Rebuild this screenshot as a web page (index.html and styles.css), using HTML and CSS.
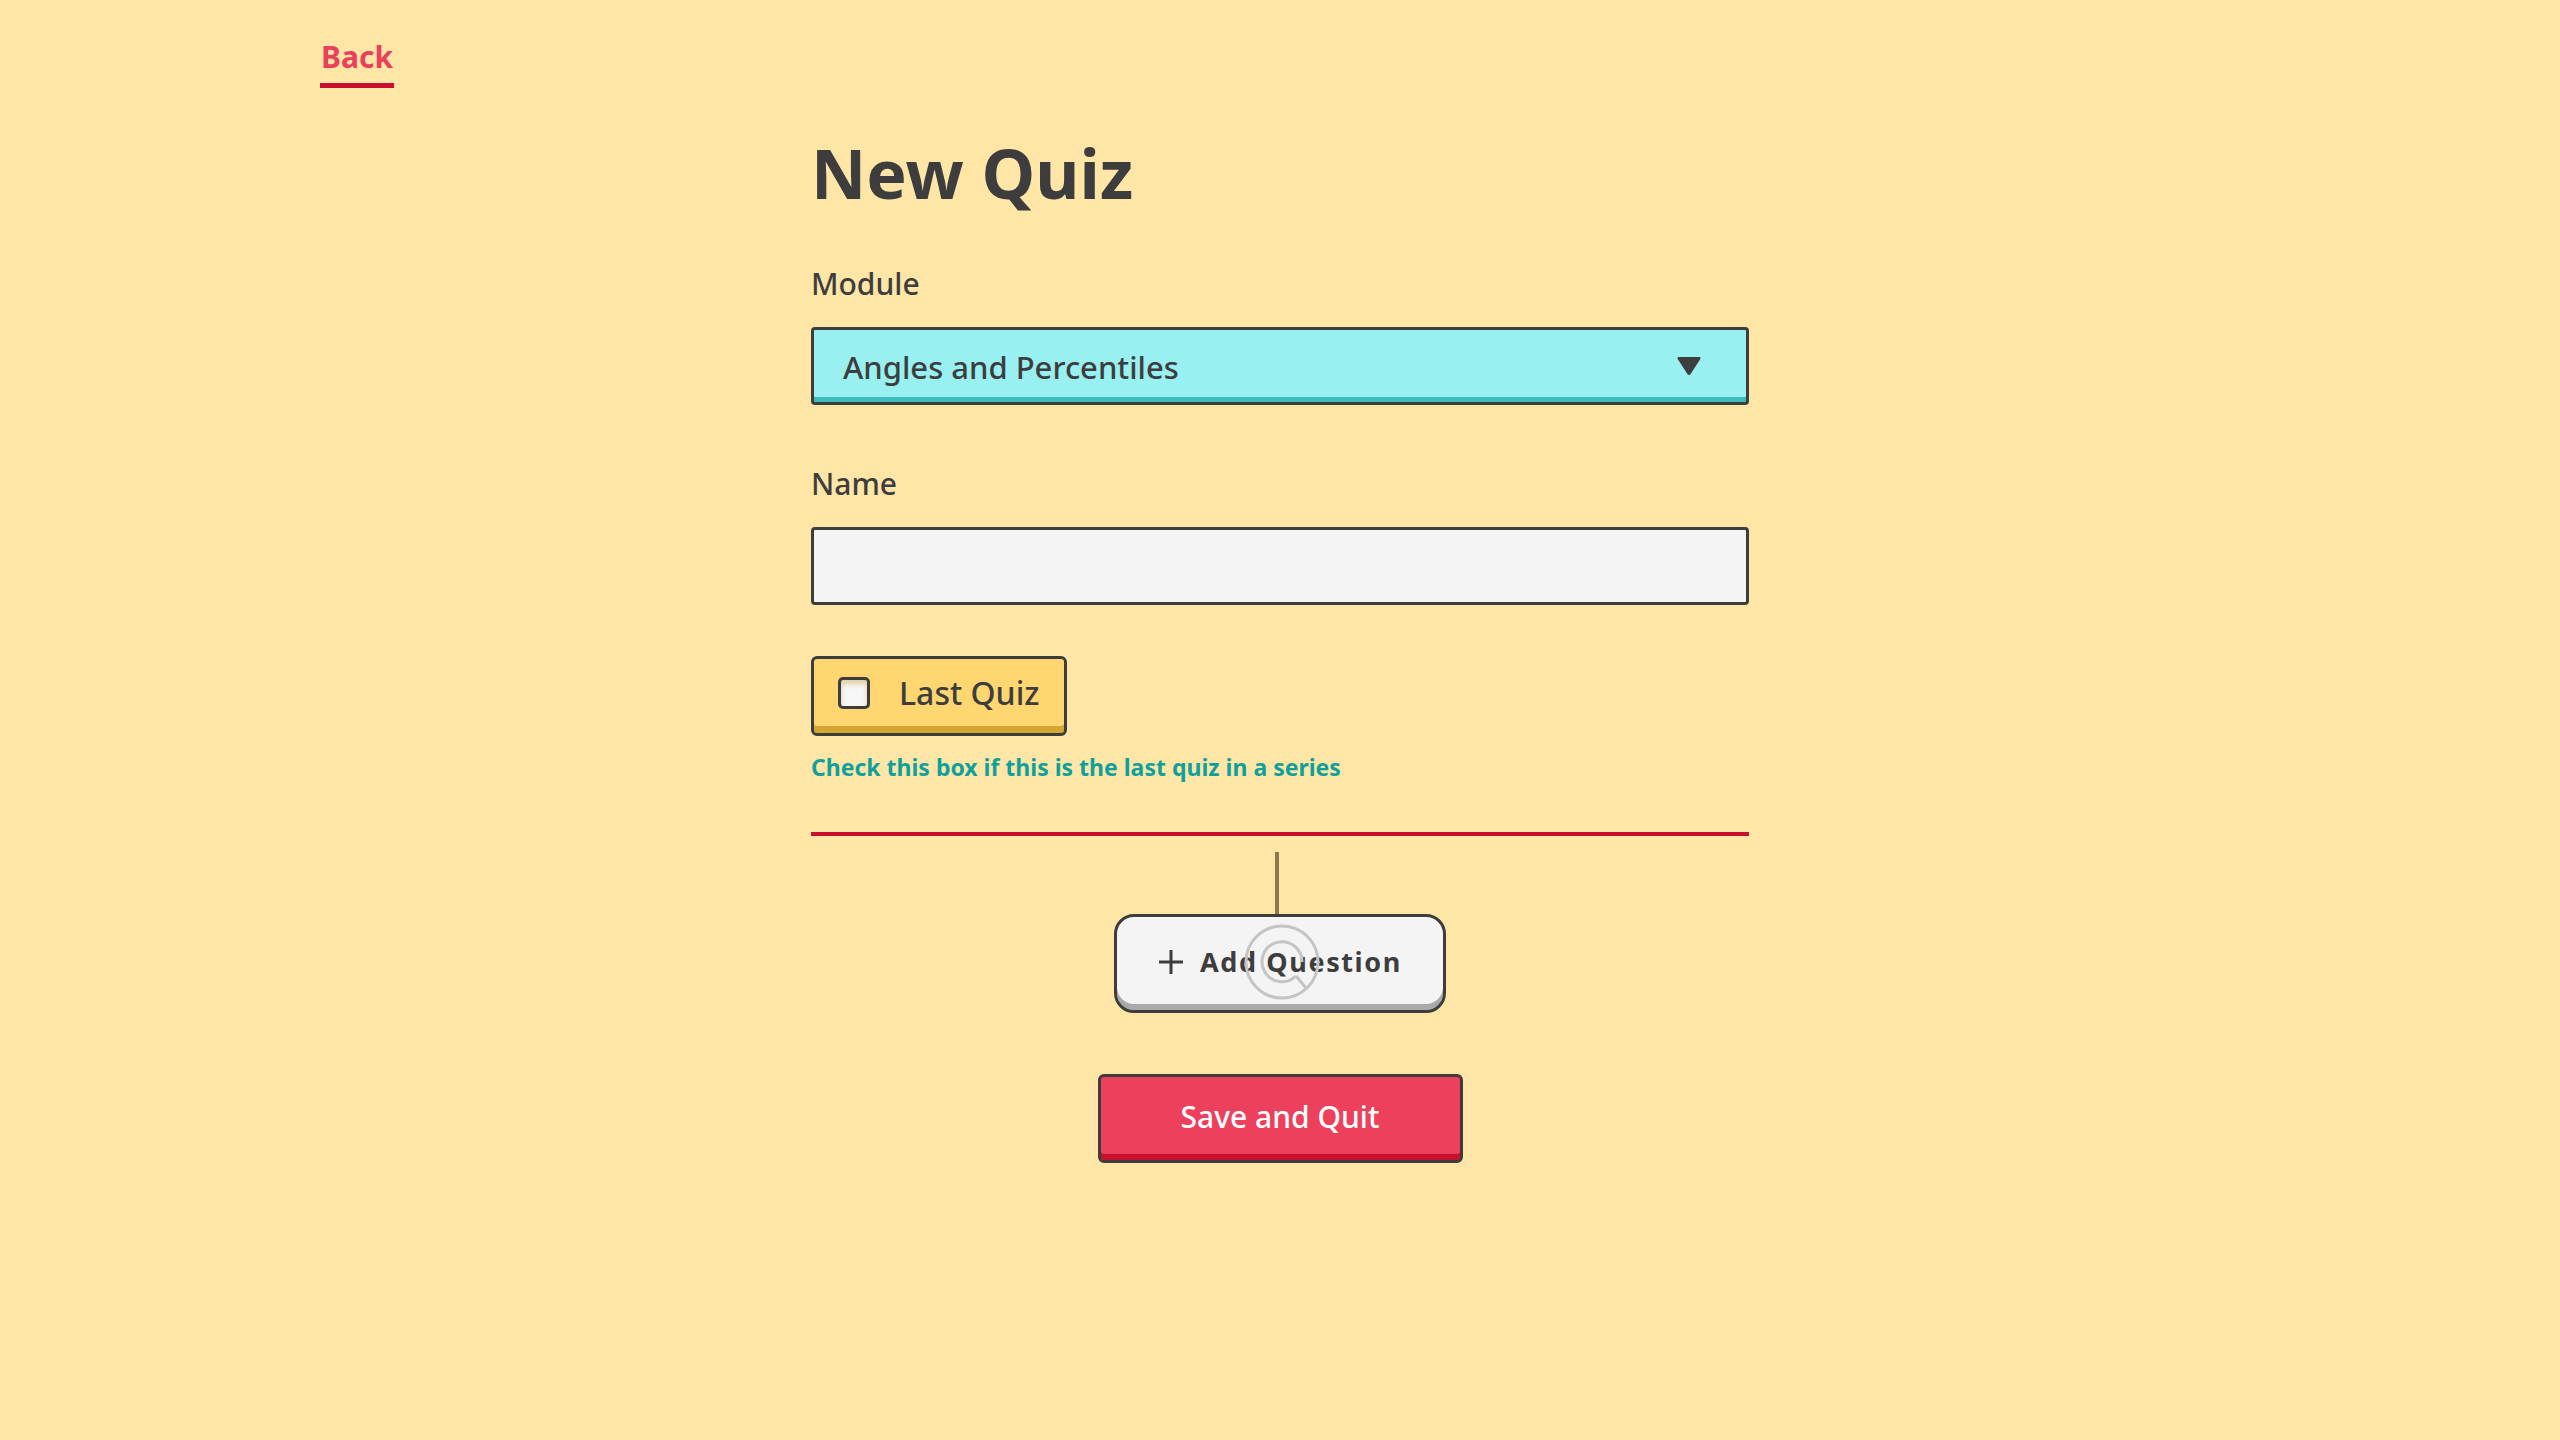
FILE: index.html
```html
<!DOCTYPE html>
<html lang="en">
<head>
<meta charset="utf-8">
<title>New Quiz</title>
<link rel="stylesheet" href="styles.css">
</head>
<body>
<header class="topbar">
  <a class="back-link" href="#">Back</a>
</header>
<main class="page">
  <h1 class="title">New Quiz</h1>

  <label class="field-label">Module</label>
  <div class="select">
    <span class="select-value">Angles and Percentiles</span>
    <svg class="select-arrow" width="26" height="20" viewBox="0 0 26 20"><path d="M3 1 H23 Q25.5 1 24 3.5 L14.6 18 Q13 20 11.4 18 L2 3.5 Q0.5 1 3 1 Z" fill="#3d3d3d"/></svg>
  </div>

  <label class="field-label name-label">Name</label>
  <div class="text-input"></div>

  <label class="check-button">
    <span class="checkbox"></span>
    <span class="check-text">Last Quiz</span>
  </label>
  <p class="hint">Check this box if this is the last quiz in a series</p>

  <hr class="divider">

  <div class="actions">
    <span class="connector"></span>
    <button class="add-btn">
      <svg class="plus" width="26" height="26" viewBox="0 0 26 26"><path d="M13 1 V25 M1 13 H25" stroke="#3d3d3d" stroke-width="3" fill="none"/></svg>
      <span class="add-text">Add Question</span>
      <svg class="ripple" width="80" height="80" viewBox="0 0 80 80"><circle cx="40" cy="40" r="36" stroke="#c4c4c4" stroke-width="3" fill="none"/><path d="M54 54 A20 20 0 1 1 60 40" stroke="#c4c4c4" stroke-width="3" fill="none"/><path d="M54 54 L64 66" stroke="#c4c4c4" stroke-width="3" fill="none"/></svg>
    </button>
    <button class="save-btn">Save and Quit</button>
  </div>
</main>
</body>
</html>
```

FILE: styles.css
```css
html, body {
  margin: 0;
  padding: 0;
}
body {
  background: #ffe6a7;
  font-family: "Noto Sans", "Open Sans", sans-serif;
  color: #3d3d3d;
  min-height: 1440px;
}
.topbar {
  padding: 37px 0 0 320px;
  height: 51px;
}
.back-link {
  display: inline-block;
  font-size: 30px;
  line-height: 40px;
  font-weight: 700;
  color: #ea405c;
  text-decoration: none;
  padding: 0 1px 6px;
  border-bottom: 5px solid #c8102e;
}
.page {
  width: 938px;
  margin: 0 auto;
  display: flex;
  flex-direction: column;
  align-items: flex-start;
}
.title {
  margin: 43px 0 0 0;
  font-size: 68px;
  line-height: 84px;
  font-weight: 700;
  color: #3d3d3d;
}
.field-label {
  margin-top: 51px;
  font-size: 30px;
  line-height: 36px;
  font-weight: 500;
}
.select {
  margin-top: 25px;
  box-sizing: border-box;
  width: 938px;
  height: 78px;
  border: 3px solid #3d3d3d;
  border-radius: 4px;
  background: #98f0f0;
  box-shadow: inset 0 -5px 0 #3dbcbc;
  display: flex;
  align-items: center;
  justify-content: space-between;
  padding: 2px 44px 0 29px;
}
.select-value {
  font-size: 31px;
  font-weight: 500;
  line-height: 40px;
}
.select-arrow {
  display: block;
  margin-top: -2px;
}
.name-label {
  margin-top: 61px;
}
.text-input {
  margin-top: 25px;
  box-sizing: border-box;
  width: 938px;
  height: 78px;
  border: 3px solid #3d3d3d;
  border-radius: 4px;
  background: #f4f4f4;
}
.check-button {
  margin-top: 51px;
  box-sizing: border-box;
  width: 256px;
  height: 80px;
  border: 3px solid #3d3d3d;
  border-radius: 6px;
  background: #ffd670;
  box-shadow: inset 0 -7px 0 #d4a734;
  display: flex;
  align-items: center;
  padding: 0 0 6px 24px;
  gap: 29px;
}
.checkbox {
  box-sizing: border-box;
  width: 32px;
  height: 32px;
  border: 3px solid #3d3d3d;
  border-radius: 5px;
  background: #f7f7f7;
  box-shadow: inset 0 4px 5px rgba(200, 160, 60, 0.45);
  flex: none;
}
.check-text {
  font-size: 32px;
  line-height: 40px;
  font-weight: 500;
}
.hint {
  margin: 16px 0 0 0;
  font-size: 23px;
  line-height: 30px;
  font-weight: 700;
  color: #10a09c;
}
.divider {
  margin: 50px 0 0 0;
  width: 938px;
  height: 4px;
  border: none;
  background: #c8102e;
}
.actions {
  width: 938px;
  display: flex;
  flex-direction: column;
  align-items: center;
}
.connector {
  display: block;
  margin-top: 16px;
  margin-right: 6px;
  width: 4px;
  height: 62px;
  background: #8a7a4e;
}
.add-btn {
  position: relative;
  box-sizing: border-box;
  width: 332px;
  height: 99px;
  border: 3px solid #3d3d3d;
  border-radius: 20px;
  background: #f4f4f4;
  box-shadow: inset 0 -6px 0 #aaaaaa;
  display: flex;
  align-items: center;
  justify-content: center;
  gap: 16px;
  padding: 0 0 4px 0;
  font-family: "Noto Sans", "Open Sans", sans-serif;
  color: #3d3d3d;
  cursor: pointer;
}
.plus {
  display: block;
  flex: none;
}
.add-text {
  font-size: 27px;
  line-height: 36px;
  font-weight: 700;
  letter-spacing: 1.6px;
}
.ripple {
  position: absolute;
  left: 50%;
  top: 50%;
  margin: -42px 0 0 -38px;
  pointer-events: none;
}
.save-btn {
  margin-top: 61px;
  box-sizing: border-box;
  width: 365px;
  height: 89px;
  border: 3px solid #3d3d3d;
  border-radius: 6px;
  background: #ec405c;
  box-shadow: inset 0 -6px 0 #c8102e;
  color: #ffffff;
  font-family: "Noto Sans", "Open Sans", sans-serif;
  font-size: 30px;
  font-weight: 500;
  padding: 0 0 4px 0;
  cursor: pointer;
}
```
